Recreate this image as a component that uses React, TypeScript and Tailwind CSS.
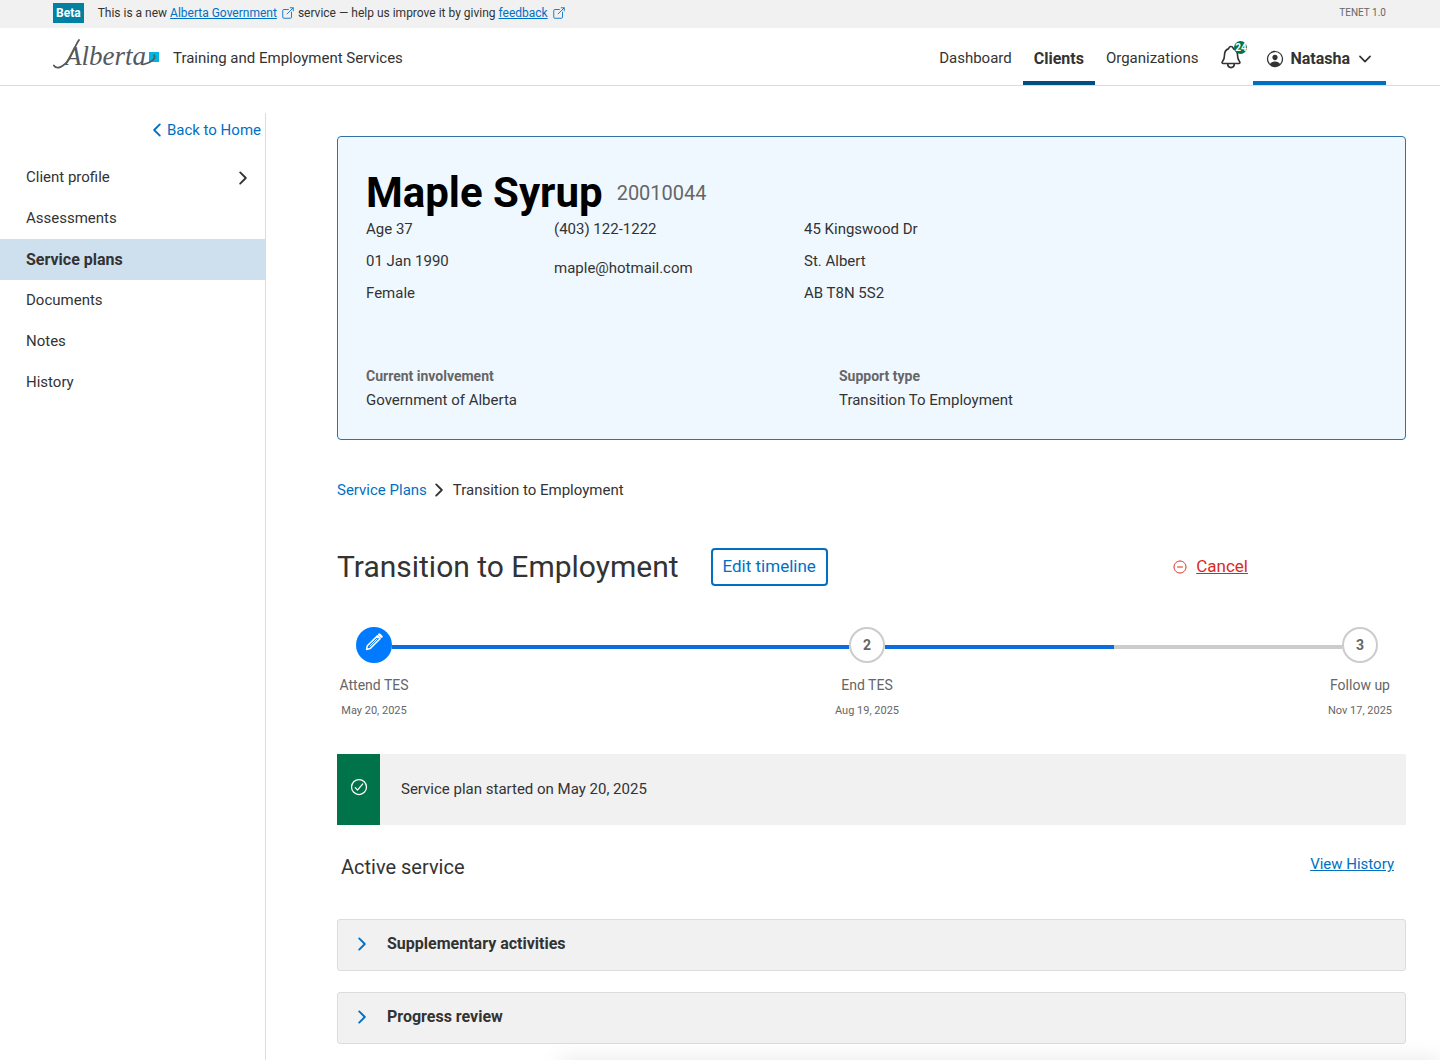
import React, { useState } from 'react';
import {
  IoCheckmarkCircleOutline,
  IoChevronBack,
  IoChevronDown,
  IoChevronForward,
  IoNotificationsOutline,
  IoOpenOutline,
  IoPersonCircleOutline,
  IoRemoveCircleOutline,
} from 'react-icons/io5';

const SIDE_ITEMS = ['Client profile', 'Assessments', 'Service plans', 'Documents', 'Notes', 'History'];

const AlbertaLogo: React.FC = () => (
  <svg viewBox="0 0 106 32" className="mb-1 h-8 w-[106px] shrink-0" role="img" aria-label="Alberta">
    <path d="M0.8 26.5 C4 31 11 28 16.5 19.5 C20 13 22 7 26 1" fill="none" stroke="#54595e" strokeWidth="1.8" strokeLinecap="round" />
    <text x="12" y="26" className="font-['Liberation_Serif',serif] text-[27px] italic" fill="#54595e">Alberta</text>
    <rect x="96" y="13" width="10" height="10" fill="#00b5e2" />
    <path d="M101 16 C103 19 100 23 90 25.5" fill="none" stroke="#54595e" strokeWidth="1.6" strokeLinecap="round" />
  </svg>
);

const PencilIcon: React.FC = () => (
  <svg viewBox="0 0 18 18" className="h-[18px] w-[18px]" fill="none" stroke="currentColor" strokeLinejoin="round" strokeLinecap="round">
    <path d="M1.6 16.4 L2.3 12.7 L12.4 2.9 L15.1 5.6 L5 15.6 Z" strokeWidth="1.5" />
    <path d="M5 13 L12 6" strokeWidth="1" />
    <path d="M14.3 1.6 L16.4 3.7" strokeWidth="2.6" />
  </svg>
);

const TopBar: React.FC = () => (
  <div className="flex h-7 items-start bg-[#f1f1f1] pl-[53px] pr-[54px] text-xs leading-[26px]">
    <span className="mt-[3px] bg-[#0081a2] px-[3px] font-bold leading-5 text-white">Beta</span>
    <p className="ml-[14px] flex items-center">
      This is a new&nbsp;
      <a href="#" className="text-[#0070c4] underline">Alberta Government</a>
      <IoOpenOutline className="ml-1 mr-[3px] h-[14px] w-[14px] text-[#0070c4]" />
      service — help us improve it by giving&nbsp;
      <a href="#" className="text-[#0070c4] underline">feedback</a>
      <IoOpenOutline className="ml-1 h-[14px] w-[14px] text-[#0070c4]" />
    </p>
    <span className="ml-auto text-[10px] text-[#666666]">TENET 1.0</span>
  </div>
);

const Header: React.FC = () => (
  <header className="flex h-[58px] items-stretch border-b border-[#dcdcdc] pl-[53px] pr-[54px]">
    <a href="#" className="flex items-center gap-[14px]">
      <AlbertaLogo />
      <span className="pt-1">Training and Employment Services</span>
    </a>
    <nav className="ml-auto flex items-stretch">
      <a href="#" className="flex items-center border-b-4 border-transparent px-[11px] pt-2">Dashboard</a>
      <a href="#" className="flex items-center border-b-4 border-[#004f84] px-[11px] pt-2 text-base font-bold">Clients</a>
      <a href="#" className="flex items-center border-b-4 border-transparent px-[11px] pt-2">Organizations</a>
      <button aria-label="Notifications" className="relative ml-[9px] mr-[9px] flex items-center">
        <IoNotificationsOutline className="h-[26px] w-[26px]" />
        <span className="absolute right-[-3px] top-[13px] flex h-[13px] w-[13px] items-center justify-center rounded-full bg-[#00734b] text-[10px] font-bold leading-none text-white">24</span>
      </button>
      <button className="flex items-center border-b-4 border-[#0070c4] px-3 pt-2 text-base font-bold">
        <IoPersonCircleOutline className="mr-[5px] h-5 w-5" />
        Natasha
        <IoChevronDown className="ml-[6px] h-[18px] w-[18px]" />
      </button>
    </nav>
  </header>
);

const Sidebar: React.FC = () => (
  <aside className="mt-[27px] w-[266px] shrink-0 border-r border-[#dcdcdc]">
    <a href="#" className="flex h-[34px] items-center justify-end pr-1 text-[#0070c4]">
      <IoChevronBack className="h-5 w-5" />
      Back to Home
    </a>
    <nav className="mt-[10px]">
      {SIDE_ITEMS.map((item) => (
        <a
          key={item}
          href="#"
          className={`flex h-[41px] items-center justify-between pl-[26px] pr-3 ${item === 'Service plans' ? 'bg-[#cedfee] text-base font-bold' : ''}`}
        >
          {item}
          {item === 'Client profile' && <IoChevronForward className="h-5 w-5" />}
        </a>
      ))}
    </nav>
  </aside>
);

const ClientCard: React.FC = () => (
  <section className="rounded-[4px] border border-[#3470a8] bg-[#f0f8ff] px-7 pb-[27px] pt-9">
    <div className="flex items-center">
      <h1 className="text-[42px] font-bold leading-10 text-black">Maple Syrup</h1>
      <span className="ml-[14px] text-xl leading-9 text-[#666666]">20010044</span>
    </div>
    <div className="flex leading-8">
      <div className="w-[188px]">
        <p>Age 37</p>
        <p>01 Jan 1990</p>
        <p>Female</p>
      </div>
      <div className="w-[250px]">
        <p>(403) 122-1222</p>
        <p className="mt-[7px]">maple@hotmail.com</p>
      </div>
      <div>
        <p>45 Kingswood Dr</p>
        <p>St. Albert</p>
        <p>AB T8N 5S2</p>
      </div>
    </div>
    <dl className="mt-[55px] flex leading-6">
      <div className="w-[473px]">
        <dt className="text-sm font-bold leading-6 text-[#666666]">Current involvement</dt>
        <dd>Government of Alberta</dd>
      </div>
      <div>
        <dt className="text-sm font-bold leading-6 text-[#666666]">Support type</dt>
        <dd>Transition To Employment</dd>
      </div>
    </dl>
  </section>
);

interface StepLabelProps {
  title: string;
  date: string;
}

const StepLabel: React.FC<StepLabelProps> = ({ title, date }) => (
  <div className="flex w-[74px] flex-col items-center whitespace-nowrap text-[#666666]">
    <span className="text-sm leading-6">{title}</span>
    <span className="mt-1 text-[11px] leading-5">{date}</span>
  </div>
);

const Timeline: React.FC = () => (
  <div className="mr-[9px] mt-[41px]">
    <div className="flex items-center px-[19px]">
      <button aria-label="Edit Attend TES" className="flex h-9 w-9 items-center justify-center rounded-full bg-[#007bff] pb-[6px] text-white">
        <PencilIcon />
      </button>
      <div className="mt-1 h-1 flex-1 bg-[#0a6cde]" />
      <div className="flex h-9 w-9 items-center justify-center rounded-full border-2 border-[#cccccc] text-sm font-bold text-[#666666]">2</div>
      <div className="mt-1 h-1 flex-1 bg-[#cccccc]">
        <div className="h-1 w-1/2 bg-[#0a6cde]" />
      </div>
      <div className="flex h-9 w-9 items-center justify-center rounded-full border-2 border-[#cccccc] text-sm font-bold text-[#666666]">3</div>
    </div>
    <div className="mt-[10px] flex justify-between">
      <StepLabel title="Attend TES" date="May 20, 2025" />
      <StepLabel title="End TES" date="Aug 19, 2025" />
      <StepLabel title="Follow up" date="Nov 17, 2025" />
    </div>
  </div>
);

const Accordion: React.FC<{ title: string }> = ({ title }) => {
  const [open, setOpen] = useState(false);

  return (
    <button
      onClick={() => setOpen(!open)}
      aria-expanded={open}
      className="flex h-[52px] w-full items-center rounded-[3px] border border-[#dcdcdc] bg-[#f1f1f1] pb-[2px] pl-[14px] text-base font-bold"
    >
      <IoChevronForward className={`mr-[15px] h-5 w-5 text-[#0070c4] ${open ? 'rotate-90' : ''}`} />
      {title}
    </button>
  );
};

export default function App() {
  return (
    <div className="flex min-h-screen flex-col overflow-x-hidden bg-white font-['Roboto',sans-serif] text-[15px] text-[#333333]">
      <TopBar />
      <Header />
      <div className="flex flex-1">
        <Sidebar />
        <main className="min-w-0 flex-1 pb-4 pl-[71px] pr-[34px] pt-[50px]">
          <ClientCard />

          <nav className="mt-[38px] flex items-center leading-6">
            <a href="#" className="text-[#0070c4]">Service Plans</a>
            <IoChevronForward className="ml-[2px] mr-1 h-5 w-5" />
            <span>Transition to Employment</span>
          </nav>

          <div className="mt-[46px] flex items-center">
            <h2 className="text-[30px] leading-9">Transition to Employment</h2>
            <button className="ml-8 h-[38px] rounded-[4px] border-2 border-[#0070c4] px-[10px] text-[17px] text-[#0070c4]">
              Edit timeline
            </button>
            <button className="ml-auto mr-[158px] flex items-center text-[17px] text-[#da291c]">
              <IoRemoveCircleOutline className="mr-2 h-4 w-4" />
              <span className="underline">Cancel</span>
            </button>
          </div>

          <Timeline />

          <div className="mt-[33px] flex h-[71px] bg-[#f1f1f1]">
            <div className="flex w-[43px] items-center justify-center bg-[#00734b] pb-[6px] text-white">
              <IoCheckmarkCircleOutline className="h-5 w-5" />
            </div>
            <p className="flex items-center pl-[21px]">Service plan started on May 20, 2025</p>
          </div>

          <div className="mt-[26px] flex items-start justify-between pl-1 pr-3">
            <h3 className="text-xl leading-8">Active service</h3>
            <a href="#" className="leading-[26px] text-[#0070c4] underline">View History</a>
          </div>

          <div className="mt-9 flex flex-col gap-[21px]">
            <Accordion title="Supplementary activities" />
            <Accordion title="Progress review" />
          </div>
        </main>
      </div>
      {/* soft shade along the bottom edge of the window */}
      <div className="pointer-events-none fixed -bottom-5 left-[560px] right-0 h-5 shadow-[0_0_24px_rgba(0,0,0,0.1)]" />
    </div>
  );
}
